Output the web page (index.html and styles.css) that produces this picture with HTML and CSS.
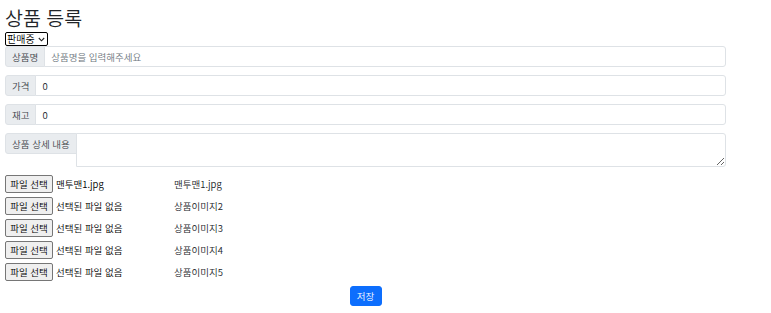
FILE: index.html
```html
<!DOCTYPE html>
<html lang="ko">
<head>
<meta charset="utf-8">
<link rel="stylesheet" href="styles.css">
</head>
<body>
<div class="page">
  <h1 class="title">상품 등록</h1>
  <div class="status"><span>판매중</span><svg class="chev" width="7" height="5" viewBox="0 0 7 5"><path d="M0.8 1 L3.5 3.8 L6.2 1" fill="none" stroke="#222" stroke-width="1.1"/></svg></div>
  <div class="group">
    <span class="label">상품명</span>
    <input class="field" type="text" placeholder="상품명을 입력해주세요">
  </div>
  <div class="group">
    <span class="label">가격</span>
    <input class="field" type="text" value="0">
  </div>
  <div class="group">
    <span class="label">재고</span>
    <input class="field" type="text" value="0">
  </div>
  <div class="group group-top">
    <span class="label">상품 상세 내용</span>
    <textarea class="field area"></textarea>
  </div>
  <div class="files">
    <div class="file-row"><span class="file-btn">파일 선택</span><span class="file-name">맨투맨1.jpg</span><span class="file-cap">맨투맨1.jpg</span></div>
    <div class="file-row"><span class="file-btn">파일 선택</span><span class="file-name">선택된 파일 없음</span><span class="file-cap">상품이미지2</span></div>
    <div class="file-row"><span class="file-btn">파일 선택</span><span class="file-name">선택된 파일 없음</span><span class="file-cap">상품이미지3</span></div>
    <div class="file-row"><span class="file-btn">파일 선택</span><span class="file-name">선택된 파일 없음</span><span class="file-cap">상품이미지4</span></div>
    <div class="file-row"><span class="file-btn">파일 선택</span><span class="file-name">선택된 파일 없음</span><span class="file-cap">상품이미지5</span></div>
  </div>
  <div class="actions"><button class="save">저장</button></div>
</div>
</body>
</html>
```
FILE: styles.css
```css
* { box-sizing: border-box; }
body {
  margin: 0;
  font-family: "Noto Sans CJK KR", "Noto Sans", sans-serif;
  font-weight: 350;
  color: #212529;
  background: #fff;
}
.page {
  padding: 4px 5px 0 5px;
  width: 731px;
}
.title {
  margin: 0;
  font-size: 19.5px;
  font-weight: 350;
  line-height: 28px;
  height: 28px;
}
.status {
  display: flex;
  width: max-content;
  align-items: center;
  gap: 3px;
  height: 14px;
  padding: 0 2px 0 1px;
  border: 1px solid #000;
  border-radius: 2px;
  background: #fff;
  color: #000;
  font-size: 10px;
  font-weight: 350;
  line-height: 12px;
}
.chev { display: block; }
.group {
  display: flex;
  align-items: stretch;
  margin-bottom: 8px;
  height: 21px;
}
.group-top {
  align-items: flex-start;
  height: 34px;
  margin-bottom: 8px;
}
.label {
  display: flex;
  align-items: center;
  padding: 0 6px;
  font-size: 9.5px;
  font-weight: 350;
  color: #3d4349;
  background: #e9ecef;
  border: 1px solid #dee2e6;
  border-radius: 3px 0 0 3px;
  white-space: nowrap;
  height: 21px;
}
.field {
  flex: 1;
  min-width: 0;
  height: 21px;
  margin-left: -1px;
  padding: 0 6px;
  font-family: inherit;
  font-weight: 350;
  font-size: 9.5px;
  color: #212529;
  border: 1px solid #dee2e6;
  border-radius: 0 3px 3px 0;
  outline: none;
}
.field::placeholder { color: #6c757d; }
.area {
  height: 34px;
  resize: vertical;
}
.files {
  display: flex;
  flex-direction: column;
  gap: 4px;
}
.file-row {
  display: flex;
  align-items: center;
  height: 18px;
  font-size: 9.5px;
}
.file-btn {
  display: inline-flex;
  align-items: center;
  justify-content: center;
  width: 48px;
  height: 18px;
  font-size: 9.5px;
  font-weight: 350;
  color: #000;
  background: #efefef;
  border: 1px solid #767676;
  border-radius: 2px;
}
.file-name {
  margin-left: 3px;
  width: 118px;
  color: #000;
}
.file-cap {
  color: #212529;
}
.actions {
  display: flex;
  justify-content: center;
  padding-top: 5px;
}
.save {
  font-family: inherit;
  font-size: 9.5px;
  font-weight: 350;
  color: #fff;
  background: #0d6efd;
  border: 1px solid #0d6efd;
  border-radius: 3px;
  padding: 0;
  width: 32px;
  height: 20px;
}
```
